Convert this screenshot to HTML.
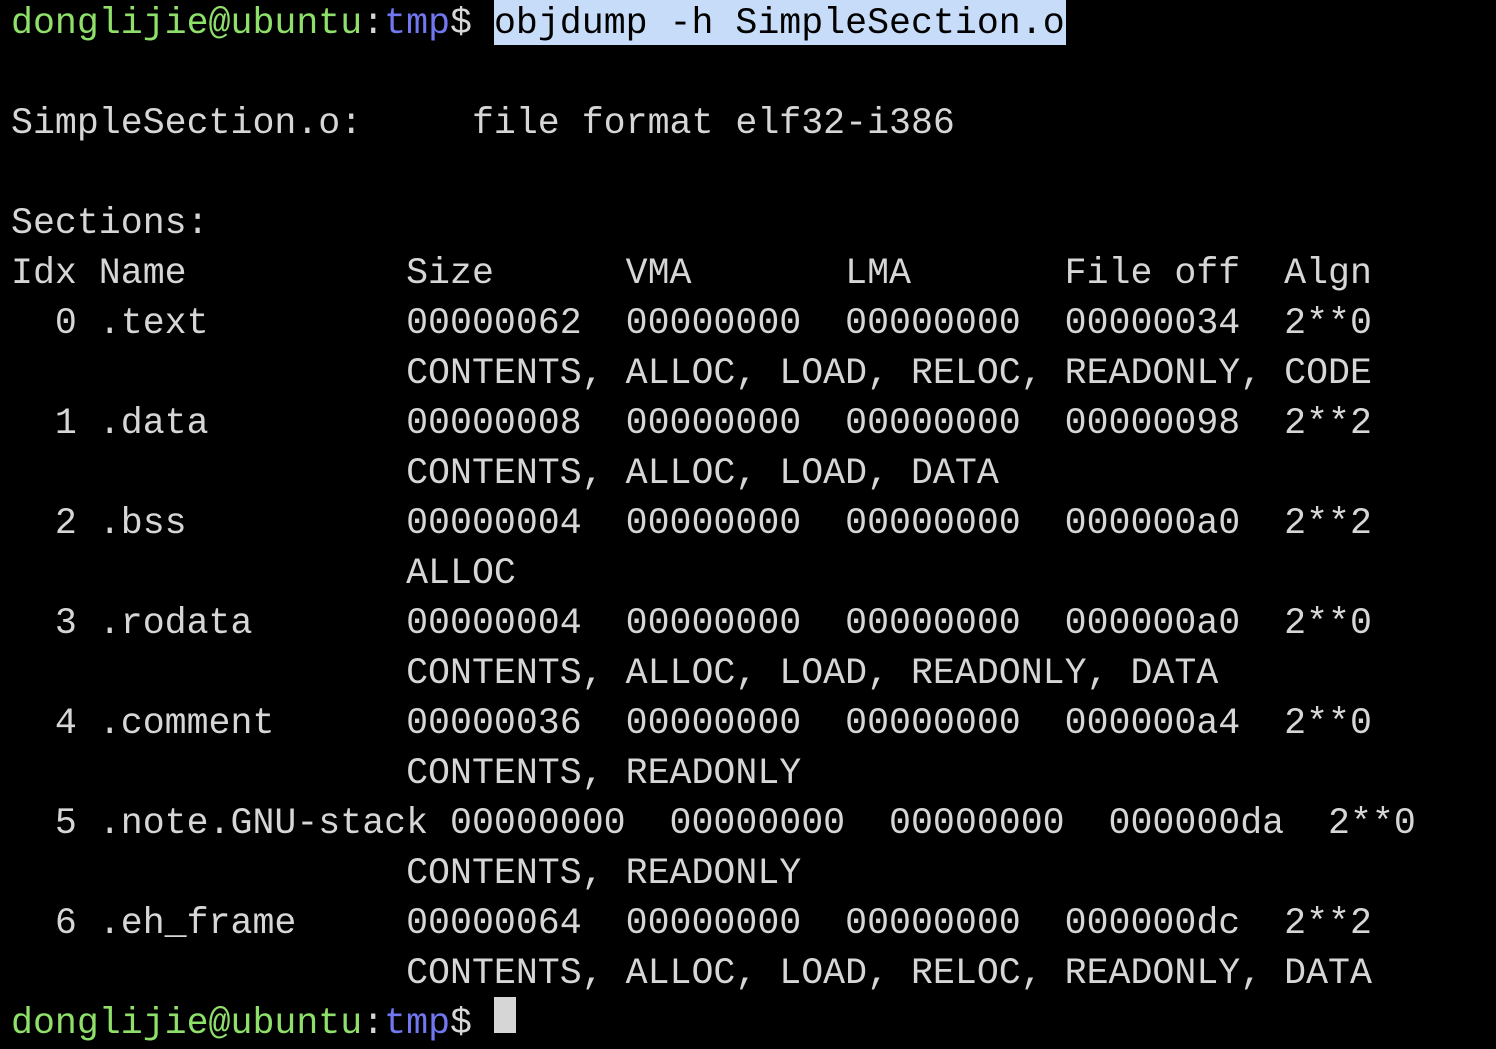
<!DOCTYPE html>
<html><head><meta charset="utf-8"><style>
html,body{margin:0;padding:0;background:#000;width:1496px;height:1032px;overflow:hidden}
pre{position:absolute;left:11px;top:-1px;margin:0;font-family:"Liberation Mono",monospace;font-size:36.6px;line-height:50px;color:#d6d6d6;white-space:pre}
.g{color:#8ee06a}.b{color:#7177f0}
.selbg{position:absolute;left:494px;top:0;width:572px;height:45px;background:#c7dcf8}
.sel{color:#000}
.cur{position:absolute;left:494px;top:997px;width:22px;height:36px;background:#d6d6d6}
</style></head><body><div class="selbg"></div><div class="cur"></div><pre><span class="g">donglijie@ubuntu</span>:<span class="b">tmp</span>$ <span class="sel">objdump -h SimpleSection.o</span>

SimpleSection.o:     file format elf32-i386

Sections:
Idx Name          Size      VMA       LMA       File off  Algn
  0 .text         00000062  00000000  00000000  00000034  2**0
                  CONTENTS, ALLOC, LOAD, RELOC, READONLY, CODE
  1 .data         00000008  00000000  00000000  00000098  2**2
                  CONTENTS, ALLOC, LOAD, DATA
  2 .bss          00000004  00000000  00000000  000000a0  2**2
                  ALLOC
  3 .rodata       00000004  00000000  00000000  000000a0  2**0
                  CONTENTS, ALLOC, LOAD, READONLY, DATA
  4 .comment      00000036  00000000  00000000  000000a4  2**0
                  CONTENTS, READONLY
  5 .note.GNU-stack 00000000  00000000  00000000  000000da  2**0
                  CONTENTS, READONLY
  6 .eh_frame     00000064  00000000  00000000  000000dc  2**2
                  CONTENTS, ALLOC, LOAD, RELOC, READONLY, DATA
<span class="g">donglijie@ubuntu</span>:<span class="b">tmp</span>$ </pre></body></html>
